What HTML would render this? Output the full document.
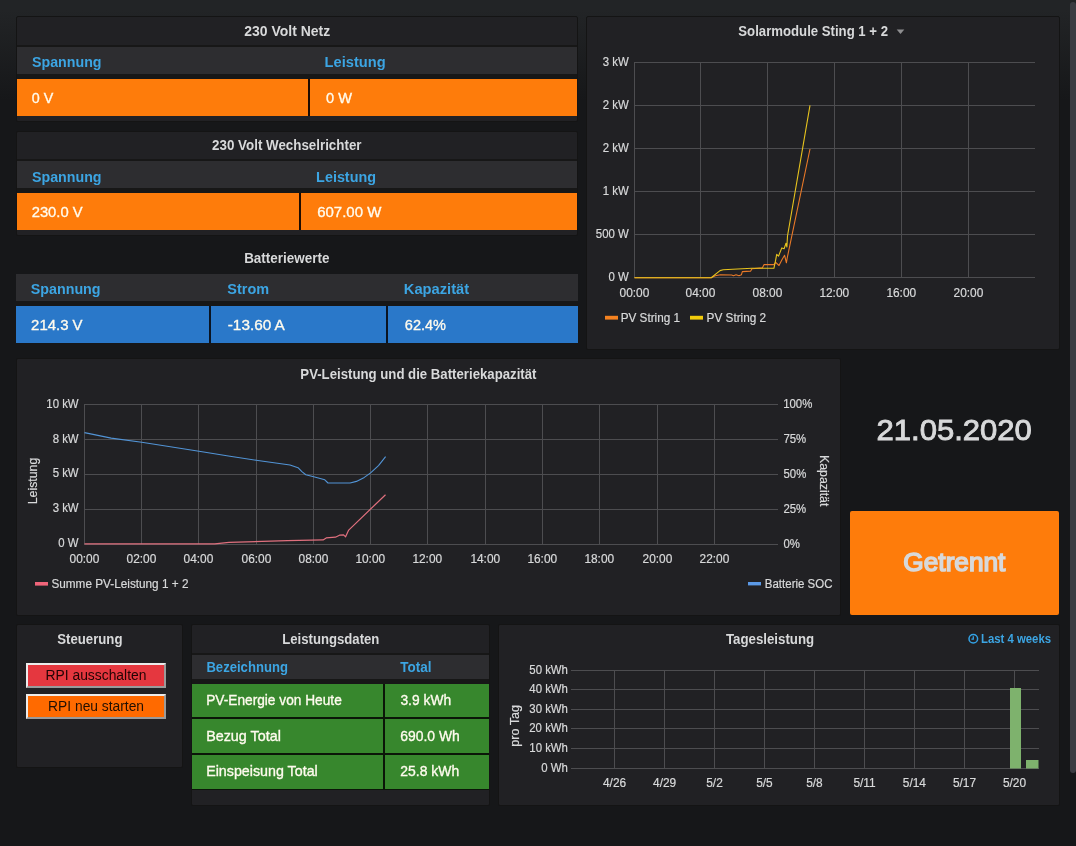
<!DOCTYPE html><html><head><meta charset="utf-8"><style>
*{margin:0;padding:0;box-sizing:border-box}
html,body{width:1076px;height:846px;overflow:hidden}
body{background:linear-gradient(180deg,#222426 10px,#161719 100px);font-family:"Liberation Sans",sans-serif;color:#d8d9da;position:relative}
.p{position:absolute;background:#212124;border:1px solid #141414;border-radius:2px}
.hr{position:absolute;background:#2d2d30}
.dk{position:absolute;background:#171717}
.c{position:absolute}
.or{background:#fe7c0b}
.bl{background:#2a78c9}
.gr{background:#37872d}
.sb{position:absolute;left:1070px;top:2px;width:6px;height:771px;background:#3b3c42;border-radius:3px}
svg{position:absolute;left:0;top:0;will-change:transform}
</style></head><body>
<div class="p" style="left:16px;top:16px;width:562px;height:106px;"></div>
<div class="dk" style="left:17px;top:45px;width:560px;height:2px;"></div>
<div class="hr" style="left:17px;top:47px;width:560px;height:27px;"></div>
<div class="dk" style="left:17px;top:74px;width:560px;height:42px;"></div>
<div class="c" style="left:17px;top:79px;width:560px;height:37px;background:#1e0c02"></div>
<div class="c or" style="left:17px;top:79px;width:291px;height:37px;"></div>
<div class="c or" style="left:310px;top:79px;width:267px;height:37px;"></div>
<div class="p" style="left:16px;top:131px;width:562px;height:105px;"></div>
<div class="dk" style="left:17px;top:159px;width:560px;height:2px;"></div>
<div class="hr" style="left:17px;top:161px;width:560px;height:27px;"></div>
<div class="dk" style="left:17px;top:188px;width:560px;height:42px;"></div>
<div class="c" style="left:17px;top:193px;width:560px;height:37px;background:#1e0c02"></div>
<div class="c or" style="left:17px;top:193px;width:282px;height:37px;"></div>
<div class="c or" style="left:301px;top:193px;width:276px;height:37px;"></div>
<div class="hr" style="left:16px;top:274px;width:562px;height:27px;"></div>
<div class="dk" style="left:16px;top:301px;width:562px;height:42px;"></div>
<div class="c" style="left:16px;top:306px;width:562px;height:37px;background:#0a1422"></div>
<div class="c bl" style="left:16px;top:306px;width:193px;height:37px;"></div>
<div class="c bl" style="left:211px;top:306px;width:175px;height:37px;"></div>
<div class="c bl" style="left:388px;top:306px;width:190px;height:37px;"></div>
<div class="p" style="left:586px;top:16px;width:474px;height:334px;"></div>
<div class="p" style="left:16px;top:358px;width:825px;height:258px;"></div>
<div class="p" style="left:16px;top:624px;width:167px;height:144px;"></div>
<div class="p" style="left:191px;top:624px;width:299px;height:182px;"></div>
<div class="p" style="left:498px;top:624px;width:562px;height:182px;"></div>
<div class="c or" style="left:850px;top:511px;width:209px;height:104px;border-radius:2px"></div>
<div style="position:absolute;border:2px solid;border-color:#ececec #9a9a9a #9a9a9a #ececec;left:26px;top:663px;width:140px;height:25px;background:#e5373f"></div>
<div style="position:absolute;border:2px solid;border-color:#ececec #9a9a9a #9a9a9a #ececec;left:26px;top:694px;width:140px;height:25px;background:#ff6a00"></div>
<div class="dk" style="left:192px;top:653px;width:297px;height:2px;"></div>
<div class="hr" style="left:192px;top:655px;width:297px;height:24px;"></div>
<div class="dk" style="left:192px;top:679px;width:297px;height:111px;"></div>
<div class="c" style="left:192px;top:684px;width:297px;height:106px;background:#0b1608"></div>
<div class="c gr" style="left:192px;top:684px;width:191px;height:33px;"></div>
<div class="c gr" style="left:385px;top:684px;width:104px;height:33px;"></div>
<div class="c gr" style="left:192px;top:719px;width:191px;height:34px;"></div>
<div class="c gr" style="left:385px;top:719px;width:104px;height:34px;"></div>
<div class="c gr" style="left:192px;top:755px;width:191px;height:34px;"></div>
<div class="c gr" style="left:385px;top:755px;width:104px;height:34px;"></div>
<svg width="1076" height="846" font-family="Liberation Sans, sans-serif"><text x="244.30" y="35.90" font-size="14" font-weight="bold" fill="#d8d9da" textLength="85.89" lengthAdjust="spacingAndGlyphs" >230 Volt Netz</text><text x="32.01" y="67.00" font-size="14.5" font-weight="bold" fill="#3ca5e3" textLength="69.56" lengthAdjust="spacingAndGlyphs" >Spannung</text><text x="324.59" y="67.00" font-size="14.5" font-weight="bold" fill="#3ca5e3" textLength="61.04" lengthAdjust="spacingAndGlyphs" >Leistung</text><text x="31.83" y="102.80" font-size="15" fill="#fffbee" textLength="21.48" lengthAdjust="spacingAndGlyphs" stroke="#fffbee" stroke-width="0.35">0 V</text><text x="326.12" y="102.80" font-size="15" fill="#fffbee" textLength="25.95" lengthAdjust="spacingAndGlyphs" stroke="#fffbee" stroke-width="0.35">0 W</text><text x="212.12" y="149.90" font-size="14" font-weight="bold" fill="#d8d9da" textLength="149.42" lengthAdjust="spacingAndGlyphs" >230 Volt Wechselrichter</text><text x="32.01" y="181.50" font-size="14.5" font-weight="bold" fill="#3ca5e3" textLength="69.56" lengthAdjust="spacingAndGlyphs" >Spannung</text><text x="316.11" y="181.50" font-size="14.5" font-weight="bold" fill="#3ca5e3" textLength="59.90" lengthAdjust="spacingAndGlyphs" >Leistung</text><text x="31.71" y="216.90" font-size="15" fill="#fffbee" textLength="50.90" lengthAdjust="spacingAndGlyphs" stroke="#fffbee" stroke-width="0.35">230.0 V</text><text x="317.20" y="216.90" font-size="15" fill="#fffbee" textLength="64.10" lengthAdjust="spacingAndGlyphs" stroke="#fffbee" stroke-width="0.35">607.00 W</text><text x="244.13" y="263.00" font-size="14" font-weight="bold" fill="#d8d9da" textLength="85.35" lengthAdjust="spacingAndGlyphs" >Batteriewerte</text><text x="30.81" y="294.40" font-size="14.5" font-weight="bold" fill="#3ca5e3" textLength="69.76" lengthAdjust="spacingAndGlyphs" >Spannung</text><text x="227.30" y="294.40" font-size="14.5" font-weight="bold" fill="#3ca5e3" textLength="41.79" lengthAdjust="spacingAndGlyphs" >Strom</text><text x="403.79" y="294.40" font-size="14.5" font-weight="bold" fill="#3ca5e3" textLength="65.37" lengthAdjust="spacingAndGlyphs" >Kapazität</text><text x="31.10" y="329.90" font-size="15" fill="#fffbee" textLength="51.50" lengthAdjust="spacingAndGlyphs" stroke="#fffbee" stroke-width="0.35">214.3 V</text><text x="227.78" y="329.90" font-size="15" fill="#fffbee" textLength="57.09" lengthAdjust="spacingAndGlyphs" stroke="#fffbee" stroke-width="0.35">-13.60 A</text><text x="404.83" y="329.90" font-size="15" fill="#fffbee" textLength="41.19" lengthAdjust="spacingAndGlyphs" stroke="#fffbee" stroke-width="0.35">62.4%</text><text x="876.54" y="440.20" font-size="29.8" fill="#d8d9da" textLength="155.36" lengthAdjust="spacingAndGlyphs" stroke="#d8d9da" stroke-width="0.9">21.05.2020</text><text x="903.38" y="571.10" font-size="25.8" fill="#d8d9da" textLength="102.02" lengthAdjust="spacingAndGlyphs" stroke="#d8d9da" stroke-width="1.5">Getrennt</text><text x="57.22" y="644.20" font-size="14" font-weight="bold" fill="#d8d9da" textLength="65.25" lengthAdjust="spacingAndGlyphs" >Steuerung</text><text x="45.51" y="679.80" font-size="14" fill="#220404" textLength="100.92" lengthAdjust="spacingAndGlyphs" >RPI ausschalten</text><text x="48.12" y="710.70" font-size="14" fill="#221002" textLength="95.94" lengthAdjust="spacingAndGlyphs" >RPI neu starten</text><text x="282.25" y="644.20" font-size="14" font-weight="bold" fill="#d8d9da" textLength="97.15" lengthAdjust="spacingAndGlyphs" >Leistungsdaten</text><text x="206.40" y="672.40" font-size="14.5" font-weight="bold" fill="#3ca5e3" textLength="81.55" lengthAdjust="spacingAndGlyphs" >Bezeichnung</text><text x="400.21" y="672.40" font-size="14.5" font-weight="bold" fill="#3ca5e3" textLength="31.17" lengthAdjust="spacingAndGlyphs" >Total</text><text x="206.20" y="705.30" font-size="15" fill="#fffbee" textLength="135.57" lengthAdjust="spacingAndGlyphs" stroke="#fffbee" stroke-width="0.35">PV-Energie von Heute</text><text x="400.45" y="705.30" font-size="15" fill="#fffbee" textLength="50.70" lengthAdjust="spacingAndGlyphs" stroke="#fffbee" stroke-width="0.35">3.9 kWh</text><text x="206.15" y="741.20" font-size="15" fill="#fffbee" textLength="74.72" lengthAdjust="spacingAndGlyphs" stroke="#fffbee" stroke-width="0.35">Bezug Total</text><text x="400.26" y="741.20" font-size="15" fill="#fffbee" textLength="59.58" lengthAdjust="spacingAndGlyphs" stroke="#fffbee" stroke-width="0.35">690.0 Wh</text><text x="206.16" y="775.60" font-size="15" fill="#fffbee" textLength="111.60" lengthAdjust="spacingAndGlyphs" stroke="#fffbee" stroke-width="0.35">Einspeisung Total</text><text x="400.35" y="775.60" font-size="15" fill="#fffbee" textLength="58.84" lengthAdjust="spacingAndGlyphs" stroke="#fffbee" stroke-width="0.35">25.8 kWh</text><text x="725.91" y="644.10" font-size="14" font-weight="bold" fill="#d8d9da" textLength="88.23" lengthAdjust="spacingAndGlyphs" >Tagesleistung</text><text x="980.97" y="643.10" font-size="12.5" font-weight="bold" fill="#3ca5e3" textLength="70.11" lengthAdjust="spacingAndGlyphs" >Last 4 weeks</text><line x1="634" y1="62.5" x2="1035" y2="62.5" stroke="#4d4d50" stroke-width="1"/><line x1="634" y1="105.5" x2="1035" y2="105.5" stroke="#4d4d50" stroke-width="1"/><line x1="634" y1="148.5" x2="1035" y2="148.5" stroke="#4d4d50" stroke-width="1"/><line x1="634" y1="191.5" x2="1035" y2="191.5" stroke="#4d4d50" stroke-width="1"/><line x1="634" y1="234.5" x2="1035" y2="234.5" stroke="#4d4d50" stroke-width="1"/><line x1="634" y1="277.5" x2="1035" y2="277.5" stroke="#4d4d50" stroke-width="1"/><line x1="634.5" y1="62" x2="634.5" y2="278" stroke="#4d4d50" stroke-width="1"/><line x1="700.5" y1="62" x2="700.5" y2="278" stroke="#4d4d50" stroke-width="1"/><line x1="767.5" y1="62" x2="767.5" y2="278" stroke="#4d4d50" stroke-width="1"/><line x1="834.5" y1="62" x2="834.5" y2="278" stroke="#4d4d50" stroke-width="1"/><line x1="901.5" y1="62" x2="901.5" y2="278" stroke="#4d4d50" stroke-width="1"/><line x1="968.5" y1="62" x2="968.5" y2="278" stroke="#4d4d50" stroke-width="1"/><text x="602.86" y="66.40" font-size="12" fill="#d8d9da" textLength="25.97" lengthAdjust="spacingAndGlyphs" stroke="#d8d9da" stroke-width="0.2">3 kW</text><text x="602.86" y="109.40" font-size="12" fill="#d8d9da" textLength="25.97" lengthAdjust="spacingAndGlyphs" stroke="#d8d9da" stroke-width="0.2">2 kW</text><text x="602.86" y="152.40" font-size="12" fill="#d8d9da" textLength="25.97" lengthAdjust="spacingAndGlyphs" stroke="#d8d9da" stroke-width="0.2">2 kW</text><text x="602.86" y="195.40" font-size="12" fill="#d8d9da" textLength="25.97" lengthAdjust="spacingAndGlyphs" stroke="#d8d9da" stroke-width="0.2">1 kW</text><text x="595.83" y="238.40" font-size="12" fill="#d8d9da" textLength="32.95" lengthAdjust="spacingAndGlyphs" stroke="#d8d9da" stroke-width="0.2">500 W</text><text x="608.56" y="281.40" font-size="12" fill="#d8d9da" textLength="20.27" lengthAdjust="spacingAndGlyphs" stroke="#d8d9da" stroke-width="0.2">0 W</text><text x="619.60" y="297.30" font-size="12" fill="#d8d9da" textLength="29.73" lengthAdjust="spacingAndGlyphs" stroke="#d8d9da" stroke-width="0.2">00:00</text><text x="685.60" y="297.30" font-size="12" fill="#d8d9da" textLength="29.73" lengthAdjust="spacingAndGlyphs" stroke="#d8d9da" stroke-width="0.2">04:00</text><text x="752.60" y="297.30" font-size="12" fill="#d8d9da" textLength="29.73" lengthAdjust="spacingAndGlyphs" stroke="#d8d9da" stroke-width="0.2">08:00</text><text x="819.40" y="297.30" font-size="12" fill="#d8d9da" textLength="29.73" lengthAdjust="spacingAndGlyphs" stroke="#d8d9da" stroke-width="0.2">12:00</text><text x="886.40" y="297.30" font-size="12" fill="#d8d9da" textLength="29.73" lengthAdjust="spacingAndGlyphs" stroke="#d8d9da" stroke-width="0.2">16:00</text><text x="953.55" y="297.30" font-size="12" fill="#d8d9da" textLength="29.73" lengthAdjust="spacingAndGlyphs" stroke="#d8d9da" stroke-width="0.2">20:00</text><text x="738.32" y="35.60" font-size="14" font-weight="bold" fill="#d8d9da" textLength="149.73" lengthAdjust="spacingAndGlyphs" >Solarmodule Sting 1 + 2</text><path d="M896.7 29.6h7.6l-3.8 4.3z" fill="#8e8e90"/><rect x="605" y="315.8" width="13" height="3.8" fill="#f58220"/><text x="620.72" y="321.60" font-size="12" fill="#d8d9da" textLength="59.26" lengthAdjust="spacingAndGlyphs" stroke="#d8d9da" stroke-width="0.2">PV String 1</text><rect x="690" y="315.8" width="13" height="3.8" fill="#f2cc0c"/><text x="706.52" y="321.60" font-size="12" fill="#d8d9da" textLength="59.67" lengthAdjust="spacingAndGlyphs" stroke="#d8d9da" stroke-width="0.2">PV String 2</text><polyline points="634.5,277.8 711.2,277.8 715.3,275.8 720.4,274.8 731.6,275 733.5,275.7 736,274.8 739,275.7 741.4,274.8 742.3,271.6 750.7,271.1 752,268.8 762.3,267.9 764.1,264.6 773.9,264.6 775.7,262.3 779,265.5 781.8,260 784.6,255.3 786.4,262.8 787.2,258 810,149" fill="none" stroke="#ea7a28" stroke-width="1.1" stroke-linejoin="round"/><polyline points="634.5,277.8 711.2,277.8 720,270.6 723.2,269.7 752,268.3 773.9,268.3 775.3,261.8 776.7,254.4 778.5,256.2 781.8,247.9 784.1,248.8 786,243.2 786.9,247 787.5,236 810,105.4" fill="none" stroke="#e8c41e" stroke-width="1.1" stroke-linejoin="round"/><line x1="84" y1="404.5" x2="778" y2="404.5" stroke="#4d4d50" stroke-width="1"/><line x1="84" y1="439.5" x2="778" y2="439.5" stroke="#4d4d50" stroke-width="1"/><line x1="84" y1="474.5" x2="778" y2="474.5" stroke="#4d4d50" stroke-width="1"/><line x1="84" y1="509.5" x2="778" y2="509.5" stroke="#4d4d50" stroke-width="1"/><line x1="84" y1="544.5" x2="778" y2="544.5" stroke="#4d4d50" stroke-width="1"/><line x1="84.5" y1="404" x2="84.5" y2="544" stroke="#4d4d50" stroke-width="1"/><line x1="141.5" y1="404" x2="141.5" y2="544" stroke="#4d4d50" stroke-width="1"/><line x1="198.5" y1="404" x2="198.5" y2="544" stroke="#4d4d50" stroke-width="1"/><line x1="256.5" y1="404" x2="256.5" y2="544" stroke="#4d4d50" stroke-width="1"/><line x1="313.5" y1="404" x2="313.5" y2="544" stroke="#4d4d50" stroke-width="1"/><line x1="370.5" y1="404" x2="370.5" y2="544" stroke="#4d4d50" stroke-width="1"/><line x1="427.5" y1="404" x2="427.5" y2="544" stroke="#4d4d50" stroke-width="1"/><line x1="485.5" y1="404" x2="485.5" y2="544" stroke="#4d4d50" stroke-width="1"/><line x1="542.5" y1="404" x2="542.5" y2="544" stroke="#4d4d50" stroke-width="1"/><line x1="599.5" y1="404" x2="599.5" y2="544" stroke="#4d4d50" stroke-width="1"/><line x1="657.5" y1="404" x2="657.5" y2="544" stroke="#4d4d50" stroke-width="1"/><line x1="714.5" y1="404" x2="714.5" y2="544" stroke="#4d4d50" stroke-width="1"/><text x="46.30" y="407.70" font-size="12" fill="#d8d9da" textLength="32.31" lengthAdjust="spacingAndGlyphs" stroke="#d8d9da" stroke-width="0.2">10 kW</text><text x="52.66" y="442.55" font-size="12" fill="#d8d9da" textLength="25.97" lengthAdjust="spacingAndGlyphs" stroke="#d8d9da" stroke-width="0.2">8 kW</text><text x="52.66" y="477.40" font-size="12" fill="#d8d9da" textLength="25.97" lengthAdjust="spacingAndGlyphs" stroke="#d8d9da" stroke-width="0.2">5 kW</text><text x="52.66" y="512.25" font-size="12" fill="#d8d9da" textLength="25.97" lengthAdjust="spacingAndGlyphs" stroke="#d8d9da" stroke-width="0.2">3 kW</text><text x="58.36" y="547.10" font-size="12" fill="#d8d9da" textLength="20.27" lengthAdjust="spacingAndGlyphs" stroke="#d8d9da" stroke-width="0.2">0 W</text><text x="783.14" y="407.80" font-size="12" fill="#d8d9da" textLength="29.16" lengthAdjust="spacingAndGlyphs" stroke="#d8d9da" stroke-width="0.2">100%</text><text x="783.43" y="442.80" font-size="12" fill="#d8d9da" textLength="22.82" lengthAdjust="spacingAndGlyphs" stroke="#d8d9da" stroke-width="0.2">75%</text><text x="783.52" y="477.80" font-size="12" fill="#d8d9da" textLength="22.82" lengthAdjust="spacingAndGlyphs" stroke="#d8d9da" stroke-width="0.2">50%</text><text x="783.43" y="512.80" font-size="12" fill="#d8d9da" textLength="22.82" lengthAdjust="spacingAndGlyphs" stroke="#d8d9da" stroke-width="0.2">25%</text><text x="783.52" y="547.80" font-size="12" fill="#d8d9da" textLength="16.48" lengthAdjust="spacingAndGlyphs" stroke="#d8d9da" stroke-width="0.2">0%</text><text x="69.60" y="562.80" font-size="12" fill="#d8d9da" textLength="29.73" lengthAdjust="spacingAndGlyphs" stroke="#d8d9da" stroke-width="0.2">00:00</text><text x="126.60" y="562.80" font-size="12" fill="#d8d9da" textLength="29.73" lengthAdjust="spacingAndGlyphs" stroke="#d8d9da" stroke-width="0.2">02:00</text><text x="183.60" y="562.80" font-size="12" fill="#d8d9da" textLength="29.73" lengthAdjust="spacingAndGlyphs" stroke="#d8d9da" stroke-width="0.2">04:00</text><text x="241.60" y="562.80" font-size="12" fill="#d8d9da" textLength="29.73" lengthAdjust="spacingAndGlyphs" stroke="#d8d9da" stroke-width="0.2">06:00</text><text x="298.60" y="562.80" font-size="12" fill="#d8d9da" textLength="29.73" lengthAdjust="spacingAndGlyphs" stroke="#d8d9da" stroke-width="0.2">08:00</text><text x="355.40" y="562.80" font-size="12" fill="#d8d9da" textLength="29.73" lengthAdjust="spacingAndGlyphs" stroke="#d8d9da" stroke-width="0.2">10:00</text><text x="412.40" y="562.80" font-size="12" fill="#d8d9da" textLength="29.73" lengthAdjust="spacingAndGlyphs" stroke="#d8d9da" stroke-width="0.2">12:00</text><text x="470.40" y="562.80" font-size="12" fill="#d8d9da" textLength="29.73" lengthAdjust="spacingAndGlyphs" stroke="#d8d9da" stroke-width="0.2">14:00</text><text x="527.40" y="562.80" font-size="12" fill="#d8d9da" textLength="29.73" lengthAdjust="spacingAndGlyphs" stroke="#d8d9da" stroke-width="0.2">16:00</text><text x="584.40" y="562.80" font-size="12" fill="#d8d9da" textLength="29.73" lengthAdjust="spacingAndGlyphs" stroke="#d8d9da" stroke-width="0.2">18:00</text><text x="642.55" y="562.80" font-size="12" fill="#d8d9da" textLength="29.73" lengthAdjust="spacingAndGlyphs" stroke="#d8d9da" stroke-width="0.2">20:00</text><text x="699.55" y="562.80" font-size="12" fill="#d8d9da" textLength="29.73" lengthAdjust="spacingAndGlyphs" stroke="#d8d9da" stroke-width="0.2">22:00</text><text x="300.35" y="378.60" font-size="14" font-weight="bold" fill="#d8d9da" textLength="236.12" lengthAdjust="spacingAndGlyphs" >PV-Leistung und die Batteriekapazität</text><text x="13.62" y="480.85" font-size="12" fill="#d8d9da" textLength="46.51" lengthAdjust="spacingAndGlyphs" transform="rotate(-90 37 480.85)" stroke="#d8d9da" stroke-width="0.2">Leistung</text><text x="793.27" y="481.20" font-size="12" fill="#d8d9da" textLength="51.46" lengthAdjust="spacingAndGlyphs" transform="rotate(90 819.5 481.2)" stroke="#d8d9da" stroke-width="0.2">Kapazität</text><rect x="35" y="582" width="13" height="3.6" fill="#f0657a"/><text x="51.41" y="587.80" font-size="12" fill="#d8d9da" textLength="137.03" lengthAdjust="spacingAndGlyphs" stroke="#d8d9da" stroke-width="0.2">Summe PV-Leistung 1 + 2</text><rect x="748" y="582" width="13" height="3.4" fill="#5b99e6"/><text x="764.84" y="587.80" font-size="12" fill="#d8d9da" textLength="67.63" lengthAdjust="spacingAndGlyphs" stroke="#d8d9da" stroke-width="0.2">Batterie SOC</text><polyline points="84.5,432.6 111.2,438.1 141.7,442.3 199,451.2 230,456.3 256.1,460.2 290,465 298,467.7 301.9,471.6 305.8,474.8 313.7,476.7 324.8,479.8 328,483 350.1,483 356.4,481.4 364.3,477.4 370.6,472.9 378.5,465.6 385.6,456.6" fill="none" stroke="#5294d6" stroke-width="1.1" stroke-linejoin="round"/><polyline points="84.5,543.8 214.8,543.8 229,542.4 287.3,540.7 323.1,539.9 326.2,537.9 335.4,537.2 339.5,535.2 343.6,534.8 345.6,536.8 348.7,530.1 385.5,494.7" fill="none" stroke="#e0707e" stroke-width="1.2" stroke-linejoin="round"/><line x1="571" y1="670.5" x2="1039" y2="670.5" stroke="#4d4d50" stroke-width="1"/><line x1="571" y1="689.5" x2="1039" y2="689.5" stroke="#4d4d50" stroke-width="1"/><line x1="571" y1="709.5" x2="1039" y2="709.5" stroke="#4d4d50" stroke-width="1"/><line x1="571" y1="728.5" x2="1039" y2="728.5" stroke="#4d4d50" stroke-width="1"/><line x1="571" y1="748.5" x2="1039" y2="748.5" stroke="#4d4d50" stroke-width="1"/><line x1="571" y1="768.5" x2="1039" y2="768.5" stroke="#4d4d50" stroke-width="1"/><line x1="614.5" y1="670" x2="614.5" y2="768" stroke="#4d4d50" stroke-width="1"/><line x1="664.5" y1="670" x2="664.5" y2="768" stroke="#4d4d50" stroke-width="1"/><line x1="714.5" y1="670" x2="714.5" y2="768" stroke="#4d4d50" stroke-width="1"/><line x1="764.5" y1="670" x2="764.5" y2="768" stroke="#4d4d50" stroke-width="1"/><line x1="814.5" y1="670" x2="814.5" y2="768" stroke="#4d4d50" stroke-width="1"/><line x1="864.5" y1="670" x2="864.5" y2="768" stroke="#4d4d50" stroke-width="1"/><line x1="914.5" y1="670" x2="914.5" y2="768" stroke="#4d4d50" stroke-width="1"/><line x1="964.5" y1="670" x2="964.5" y2="768" stroke="#4d4d50" stroke-width="1"/><line x1="1014.5" y1="670" x2="1014.5" y2="768" stroke="#4d4d50" stroke-width="1"/><text x="529.30" y="674.00" font-size="12" fill="#d8d9da" textLength="38.65" lengthAdjust="spacingAndGlyphs" stroke="#d8d9da" stroke-width="0.2">50 kWh</text><text x="529.30" y="693.00" font-size="12" fill="#d8d9da" textLength="38.65" lengthAdjust="spacingAndGlyphs" stroke="#d8d9da" stroke-width="0.2">40 kWh</text><text x="529.30" y="713.00" font-size="12" fill="#d8d9da" textLength="38.65" lengthAdjust="spacingAndGlyphs" stroke="#d8d9da" stroke-width="0.2">30 kWh</text><text x="529.29" y="732.00" font-size="12" fill="#d8d9da" textLength="38.65" lengthAdjust="spacingAndGlyphs" stroke="#d8d9da" stroke-width="0.2">20 kWh</text><text x="529.30" y="752.00" font-size="12" fill="#d8d9da" textLength="38.65" lengthAdjust="spacingAndGlyphs" stroke="#d8d9da" stroke-width="0.2">10 kWh</text><text x="541.36" y="772.00" font-size="12" fill="#d8d9da" textLength="26.61" lengthAdjust="spacingAndGlyphs" stroke="#d8d9da" stroke-width="0.2">0 Wh</text><text x="603.02" y="787.20" font-size="12" fill="#d8d9da" textLength="23.12" lengthAdjust="spacingAndGlyphs" stroke="#d8d9da" stroke-width="0.2">4/26</text><text x="653.07" y="787.20" font-size="12" fill="#d8d9da" textLength="23.12" lengthAdjust="spacingAndGlyphs" stroke="#d8d9da" stroke-width="0.2">4/29</text><text x="706.28" y="787.20" font-size="12" fill="#d8d9da" textLength="16.51" lengthAdjust="spacingAndGlyphs" stroke="#d8d9da" stroke-width="0.2">5/2</text><text x="756.23" y="787.20" font-size="12" fill="#d8d9da" textLength="16.51" lengthAdjust="spacingAndGlyphs" stroke="#d8d9da" stroke-width="0.2">5/5</text><text x="806.23" y="787.20" font-size="12" fill="#d8d9da" textLength="16.51" lengthAdjust="spacingAndGlyphs" stroke="#d8d9da" stroke-width="0.2">5/8</text><text x="853.41" y="787.20" font-size="12" fill="#d8d9da" textLength="22.24" lengthAdjust="spacingAndGlyphs" stroke="#d8d9da" stroke-width="0.2">5/11</text><text x="902.87" y="787.20" font-size="12" fill="#d8d9da" textLength="23.12" lengthAdjust="spacingAndGlyphs" stroke="#d8d9da" stroke-width="0.2">5/14</text><text x="952.97" y="787.20" font-size="12" fill="#d8d9da" textLength="23.12" lengthAdjust="spacingAndGlyphs" stroke="#d8d9da" stroke-width="0.2">5/17</text><text x="1002.92" y="787.20" font-size="12" fill="#d8d9da" textLength="23.12" lengthAdjust="spacingAndGlyphs" stroke="#d8d9da" stroke-width="0.2">5/20</text><text x="498.16" y="725.90" font-size="12" fill="#d8d9da" textLength="41.68" lengthAdjust="spacingAndGlyphs" transform="rotate(-90 519 725.9)" stroke="#d8d9da" stroke-width="0.2">pro Tag</text><rect x="1010" y="688" width="11" height="80.5" fill="#7eb26d"/><rect x="1026" y="760" width="12.5" height="8.5" fill="#7eb26d"/><circle cx="973.3" cy="638.8" r="4.3" fill="none" stroke="#33a2e5" stroke-width="1.5"/><path d="M973.3 636.2v2.9h-1.9" fill="none" stroke="#33a2e5" stroke-width="1.3"/></svg>
<div class="sb"></div>
</body></html>
